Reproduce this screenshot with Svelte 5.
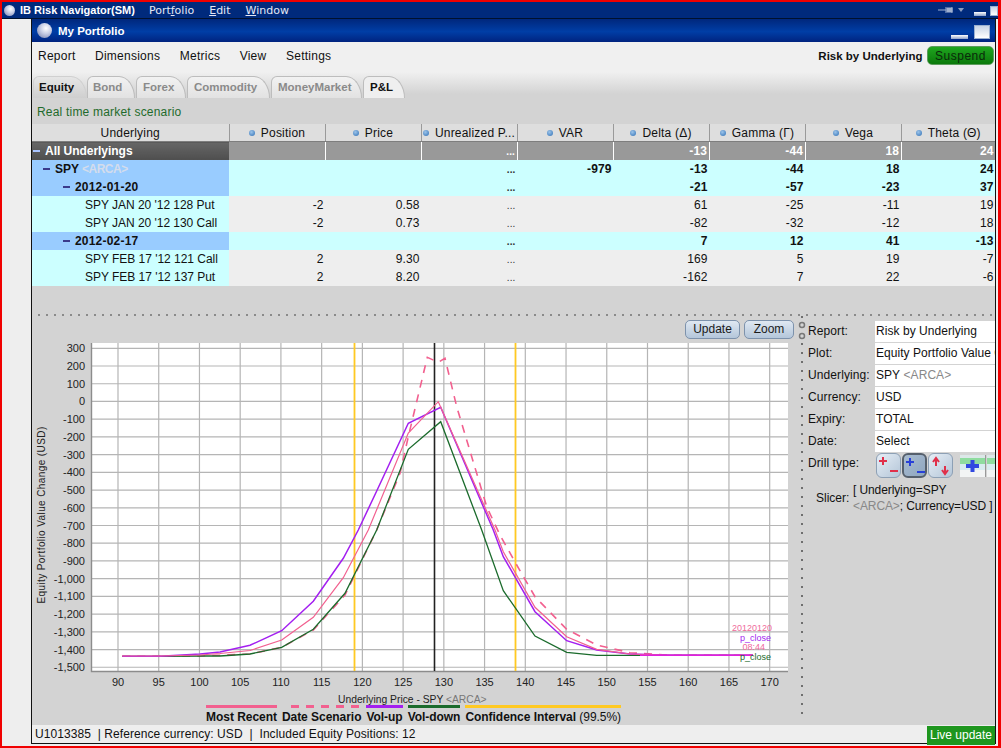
<script>
    // table content, top to bottom
    const columns = ["Position", "Price", "Unrealized P...", "VAR", "Delta (Δ)", "Gamma (Γ)", "Vega", "Theta (Θ)"];
    const rows = [
        { kind: "all", label: "All Underlyings", cells: ["", "", "...", "", "-13", "-44", "18", "24"] },
        { kind: "group spy", label: "SPY", exch: "<ARCA>", cells: ["", "", "...", "-979", "-13", "-44", "18", "24"] },
        { kind: "group date", label: "2012-01-20", cells: ["", "", "...", "", "-21", "-57", "-23", "37"] },
        { kind: "leaf", label: "SPY JAN 20 '12 128 Put", cells: ["-2", "0.58", "...", "", "61", "-25", "-11", "19"] },
        { kind: "leaf", label: "SPY JAN 20 '12 130 Call", cells: ["-2", "0.73", "...", "", "-82", "-32", "-12", "18"] },
        { kind: "group date", label: "2012-02-17", cells: ["", "", "...", "", "7", "12", "41", "-13"] },
        { kind: "leaf", label: "SPY FEB 17 '12 121 Call", cells: ["2", "9.30", "...", "", "169", "5", "19", "-7"] },
        { kind: "leaf", label: "SPY FEB 17 '12 137 Put", cells: ["2", "8.20", "...", "", "-162", "7", "22", "-6"] },
    ];

    const tabs = [
        { name: "Equity", cls: "on" },
        { name: "Bond", cls: "" },
        { name: "Forex", cls: "" },
        { name: "Commodity", cls: "" },
        { name: "MoneyMarket", cls: "" },
        { name: "P&L", cls: "pl" },
    ];

    // chart scales are in page pixels, the svg viewBox uses the same numbers
    const xTicks = [90, 95, 100, 105, 110, 115, 120, 125, 130, 135, 140, 145, 150, 155, 160, 165, 170];
    const yTicks = [300, 200, 100, 0, -100, -200, -300, -400, -500, -600, -700, -800, -900, -1000, -1100, -1200, -1300, -1400, -1500];
    const xPos = (v) => 118 + (v - 90) * 8.146;
    const yPos = (v) => 348.3 + (300 - v) * 0.1772;
    const fmt = (v) => (Math.abs(v) >= 1000 ? `-${Math.floor(Math.abs(v) / 1000)},${String(Math.abs(v) % 1000).padStart(3, "0")}` : String(v));

    const recent = "122,656 160,656 200,655 220,653.5 250,650.5 281.7,640 313.3,617.3 343.3,577.7 368.3,530 408.3,433 438.3,401.7 495,530 503.3,551.7 535,607.3 566.7,636.7 596.7,649.3 630,654 670,655.3 753,655.3";
    const volUp = "122.3,656.3 160,656.3 200,654 220,652 250,645.3 281.7,630.7 313.3,601.3 343.3,558.3 358.3,530 376.7,491 408.3,423.3 440.7,407.3 493.3,530 503.3,556.7 535,611.7 566.7,640.7 596.7,650 630,654 670,655.3 753,655.3";
    const volDown = "122.3,656.3 160,656.3 200,656 220,656 250,654 281.7,647.3 313.3,629.3 345,593.3 376.7,530 408.3,449.3 440.7,421.7 481.7,530 503.3,590.7 535,636 566.7,652.3 596.7,655.3 670,655.3 753,655.3";
    const scenario = "122.3,656.3 200,656 250,654 281.7,647.3 313.3,630 345,595 376.7,530 400,473.3 408.3,436.7 427.3,357.3 438.3,362.3 445,358.3 456.7,406.7 486.7,506.7 500,535 516.7,565 535,596.7 566.7,629.3 596.7,645 630,652.7 670,655.3 753,655.3";

    const selectors = [
        { label: "Report:", value: "Risk by Underlying" },
        { label: "Plot:", value: "Equity Portfolio Value Change" },
        { label: "Underlying:", value: "SPY", exch: "<ARCA>" },
        { label: "Currency:", value: "USD" },
        { label: "Expiry:", value: "TOTAL" },
        { label: "Date:", value: "Select" },
    ];
</script>

<div class="screen">
    <div class="app-title">
        <span class="globe small"></span>
        <b>IB Risk Navigator(SM)</b>
        <nav>
            <span>Port<u>f</u>olio</span>
            <span><u>E</u>dit</span>
            <span><u>W</u>indow</span>
        </nav>
        <svg class="pin" width="26" height="8" viewBox="0 0 26 8">
            <path d="M0 4h8M8 1v6M9 2h5v4H9zM14 1v6" stroke="#9fb0cf" fill="#9fb0cf" />
            <path d="M20 2h6l-3 4z" fill="#8a9cc0" />
        </svg>
        <span class="min-btn small"></span>
        <span class="max-btn small"></span>
    </div>

    <div class="desk">
        <div class="gutter"></div>
        <div class="window">
            <div class="win-title">
                <span class="globe"></span>
                <b>My Portfolio</b>
                <span class="min-btn"></span>
                <span class="max-btn"></span>
            </div>

            <div class="head">
                <div class="menu">
                    <span>Report</span>
                    <span>Dimensions</span>
                    <span>Metrics</span>
                    <span>View</span>
                    <span>Settings</span>
                    <b class="report-name">Risk by Underlying</b>
                    <button class="suspend">Suspend</button>
                </div>
                <div class="tabs">
                    {#each tabs as tab}
                        <div class="tab {tab.cls}">{tab.name}</div>
                    {/each}
                </div>
                <div class="scenario">Real time market scenario</div>
            </div>

            <table>
                <colgroup>
                    <col class="c-first" />
                    {#each columns.slice(0, -1) as _}
                        <col class="c-num" />
                    {/each}
                    <col />
                </colgroup>
                <thead>
                    <tr>
                        <th>Underlying</th>
                        {#each columns as col}
                            <th><i class="dot"></i>{col}</th>
                        {/each}
                    </tr>
                </thead>
                <tbody>
                    {#each rows as row}
                        <tr class={row.kind}>
                            <td class="name">
                                {#if row.kind !== "leaf"}<i class="minus"></i>{/if}{row.label}
                                {#if row.exch}<span class="exch">{row.exch}</span>{/if}
                            </td>
                            {#each row.cells as cell, i}
                                <td class:dots={i === 2}>{cell}</td>
                            {/each}
                        </tr>
                    {/each}
                </tbody>
            </table>

            <div class="h-split"></div>

            <div class="lower">
                <div class="chart-col">
                    <div class="chart-tools">
                        <button class="tool">Update</button>
                        <button class="tool">Zoom</button>
                    </div>
                    <svg class="chart" width="768" height="363" viewBox="32 340 768 363">
                        <rect x="91" y="343" width="697" height="328" fill="#fff" />
                        <g stroke="#b5b5b5" stroke-width="1.2">
                            {#each xTicks as t}
                                <line x1={xPos(t)} x2={xPos(t)} y1="343" y2="671" />
                            {/each}
                            {#each yTicks as t}
                                <line x1="91" x2="788" y1={yPos(t)} y2={yPos(t)} />
                            {/each}
                        </g>
                        <path d="M91.5 343V671.5H788" fill="none" stroke="#8c8c8c" stroke-width="1.4" />
                        <g class="tick" text-anchor="end">
                            {#each yTicks as t}
                                <text x="85" y={yPos(t) + 4}>{fmt(t)}</text>
                            {/each}
                        </g>
                        <g class="tick" text-anchor="middle">
                            {#each xTicks as t}
                                <text x={xPos(t)} y="686">{t}</text>
                            {/each}
                        </g>
                        <text class="axis y-title" transform="translate(45 515) rotate(-90)" text-anchor="middle">Equity Portfolio Value Change (USD)</text>
                        <text class="axis" x="338" y="703">Underlying Price - SPY <tspan fill="#777">&lt;ARCA&gt;</tspan></text>

                        <line x1="354.5" x2="354.5" y1="343" y2="671" stroke="#ffc922" stroke-width="1.8" />
                        <line x1="515.5" x2="515.5" y1="343" y2="671" stroke="#ffc922" stroke-width="1.8" />
                        <line x1="434.5" x2="434.5" y1="343" y2="671" stroke="#222" stroke-width="1.6" />

                        <polyline points={scenario} fill="none" stroke="#f2608f" stroke-width="1.6" stroke-dasharray="8 7" />
                        <polyline points={volDown} fill="none" stroke="#1b6b2c" stroke-width="1.3" />
                        <polyline points={volUp} fill="none" stroke="#a31ff0" stroke-width="1.5" />
                        <polyline points={recent} fill="none" stroke="#f2608f" stroke-width="1.2" />
                        <polyline points="640,655.3 753,655.3" fill="none" stroke="#e020e0" stroke-width="1.5" />

                        <g class="end-label" text-anchor="end">
                            <text x="772" y="631" fill="#f06a9c">20120120</text>
                            <text x="771" y="641" fill="#a31ff0">p_close</text>
                            <text x="765" y="650" fill="#f06a9c">08:44</text>
                            <text x="771" y="660" fill="#1b6b2c">p_close</text>
                        </g>
                    </svg>
                    <div class="legend">
                        <div class="item"><i class="bar recent"></i>Most Recent</div>
                        <div class="item"><i class="bar dashed"></i>Date Scenario</div>
                        <div class="item"><i class="bar up"></i>Vol-up</div>
                        <div class="item"><i class="bar down"></i>Vol-down</div>
                        <div class="item"><i class="bar conf"></i><span>Confidence Interval <em>(99.5%)</em></span></div>
                    </div>
                </div>

                <div class="v-split">
                    <svg width="8" height="20" viewBox="0 0 8 20">
                        <circle cx="4" cy="4" r="2.5" fill="none" stroke="#777" stroke-width="1.5" />
                        <circle cx="4" cy="15" r="2.5" fill="none" stroke="#777" stroke-width="1.5" />
                    </svg>
                </div>

                <div class="side">
                    {#each selectors as s}
                        <div class="sel">
                            <label>{s.label}</label>
                            <div class="box">{s.value}{#if s.exch}&nbsp;<span class="exch-side">{s.exch}</span>{/if}</div>
                        </div>
                    {/each}
                    <div class="drill">
                        <label>Drill type:</label>
                        <button class="dbtn">
                            <svg width="24" height="24" viewBox="0 0 24 24">
                                <path d="M6 3v8M2 7h8" stroke="#e0304a" stroke-width="2" />
                                <path d="M13 17h8" stroke="#e0304a" stroke-width="2" />
                            </svg>
                        </button>
                        <button class="dbtn sel-on">
                            <svg width="24" height="24" viewBox="0 0 24 24">
                                <path d="M6 3v8M2 7h8" stroke="#2840d8" stroke-width="2" />
                                <path d="M13 17h8" stroke="#2840d8" stroke-width="2" />
                            </svg>
                        </button>
                        <button class="dbtn">
                            <svg width="24" height="24" viewBox="0 0 24 24">
                                <path d="M7 12V5M4 8l3-4 3 4" stroke="#e0304a" stroke-width="2" fill="none" />
                                <path d="M16 12v7M13 16l3 4 3-4" stroke="#e0304a" stroke-width="2" fill="none" />
                            </svg>
                        </button>
                        <i class="pic">
                            <svg width="25" height="22" viewBox="0 0 25 22">
                                <path d="M12.5 5v12M6 11h13" stroke="#3048e0" stroke-width="4" />
                            </svg>
                        </i>
                        <i class="pic cut"></i>
                    </div>
                    <div class="slicer">
                        <label>Slicer:</label>
                        <div>[ Underlying=SPY<br /><span class="exch-side">&lt;ARCA&gt;</span>; Currency=USD ]</div>
                    </div>
                </div>
            </div>

            <div class="status">
                <span>U1013385 &nbsp;| Reference currency: USD &nbsp;| &nbsp;Included Equity Positions: 12</span>
                <div class="live">Live update</div>
            </div>
        </div>
    </div>
</div>

<style>
    :global(body) {
        margin: 0;
        background: #eee;
    }

    .screen {
        box-sizing: border-box;
        width: 1001px;
        height: 748px;
        border: solid #f00000;
        border-width: 2px 3px 2px 2px;
        display: flex;
        flex-direction: column;
        font-family: "Liberation Sans", Arial, sans-serif;
        font-size: 12px;
        color: #111;
        overflow: hidden;
    }

    .app-title {
        height: 16px;
        flex: none;
        display: flex;
        align-items: center;
        background: #002a7c;
        color: #fff;
        border-bottom: 1px solid #00112e;
    }

    .app-title b {
        margin-left: 5px;
        font-size: 11px;
    }

    .app-title nav {
        display: flex;
        gap: 15px;
        margin-left: 14px;
        font-family: "DejaVu Sans", sans-serif;
        font-size: 11px;
        color: #e4e8f4;
    }

    .pin {
        margin-left: auto;
        margin-right: 10px;
    }

    .globe {
        width: 15px;
        height: 15px;
        margin-left: 5px;
        border-radius: 50%;
        background: radial-gradient(circle at 60% 35%, #fff 0, #c9cfe6 40%, #6d78a8 100%);
        flex: none;
    }

    .globe.small {
        width: 11px;
        height: 11px;
        margin-left: 2px;
    }

    .min-btn {
        width: 17px;
        height: 4px;
        background: linear-gradient(#fff, #8da0c8);
        align-self: flex-end;
        margin-bottom: 3px;
        margin-right: 6px;
    }

    .min-btn.small {
        width: 12px;
        margin-bottom: 2px;
        margin-right: 4px;
    }

    .max-btn {
        width: 14px;
        height: 12px;
        background: linear-gradient(#c8d4e6, #fff);
        border: 1px solid #9bb0d0;
        margin-right: 5px;
        align-self: flex-end;
        margin-bottom: 3px;
        flex: none;
    }

    .max-btn.small {
        width: 6px;
        height: 8px;
        margin-right: 0;
        margin-bottom: 2px;
    }

    .desk {
        flex: 1;
        display: flex;
        min-height: 0;
    }

    .gutter {
        width: 29px;
        flex: none;
        background: #eee;
    }

    .window {
        box-sizing: border-box;
        width: 965px;
        margin-bottom: 2px;
        border: solid #111;
        border-width: 0 1px 1px 1px;
        display: flex;
        flex-direction: column;
        background: #d3d3d3;
    }

    .win-title {
        height: 23px;
        flex: none;
        display: flex;
        align-items: center;
        color: #fff;
        background: linear-gradient(#00277c, #003ea6 55%, #00237f);
    }

    .win-title b {
        margin-left: 6px;
        margin-right: auto;
        font-size: 11.5px;
    }

    .head {
        flex: none;
        height: 82px;
        background: linear-gradient(#f0f0f0 30px, #d3d3d3 52px);
    }

    .menu {
        height: 27px;
        display: flex;
        align-items: center;
        gap: 19.5px;
        padding: 0 1px 0 6px;
        letter-spacing: 0.25px;
    }

    .report-name {
        margin-left: auto;
        margin-right: -15px;
        font-size: 11.5px;
        letter-spacing: 0;
    }

    .suspend {
        width: 67px;
        height: 19px;
        padding: 0;
        border: 1px solid #5c9c5c;
        border-radius: 5px;
        background: linear-gradient(#1fa51f, #0b7a0b);
        color: #0a2a0a;
        font: 12px "Liberation Sans", Arial, sans-serif;
        letter-spacing: 0.5px;
    }

    .tabs {
        margin-top: 7px;
        height: 22px;
        display: flex;
        padding-left: 1px;
    }

    .tab {
        box-sizing: border-box;
        height: 22px;
        padding: 4px 0 0 6px;
        margin-right: 1px;
        font-size: 11.5px;
        font-weight: bold;
        color: #8a8a8a;
        border: 1px solid #bdbdbd;
        border-bottom: 0;
        border-radius: 6px 16px 0 0 / 6px 22px 0 0;
        background: linear-gradient(#f2f2f2, #e2e2e2);
    }

    .tab:nth-child(1) {
        width: 54px;
        padding-left: 5px;
        margin-right: 0;
    }

    .tab:nth-child(2) {
        width: 48px;
        padding-left: 5px;
    }

    .tab:nth-child(3) {
        width: 50px;
    }

    .tab:nth-child(4) {
        width: 83px;
    }

    .tab:nth-child(5) {
        width: 91px;
    }

    .tab:nth-child(6) {
        width: 42px;
    }

    .tab.on {
        color: #111;
        border-color: #d0d0d0;
        background: linear-gradient(#e6e6e6, #cfcfcf);
    }

    .tab.pl {
        color: #111;
        background: #efefef;
    }

    .scenario {
        padding: 7px 0 0 5px;
        color: #1f6b2c;
        letter-spacing: 0.2px;
    }

    table {
        flex: none;
        width: 963px;
        border-collapse: collapse;
        table-layout: fixed;
    }

    .c-first {
        width: 197px;
    }

    .c-num {
        width: 96px;
    }

    th {
        height: 17px;
        padding: 0;
        font-weight: normal;
        background: #dedede;
        border-right: 1px solid #9a9a9a;
        border-bottom: 1px solid #7e7e7e;
        white-space: nowrap;
        letter-spacing: 0.2px;
        overflow: hidden;
    }

    th:last-child {
        border-right: 0;
    }

    .dot {
        display: inline-block;
        width: 6px;
        height: 6px;
        margin-right: 6px;
        border-radius: 50%;
        vertical-align: 1px;
        background: radial-gradient(circle at 40% 35%, #9cc4ea, #2f6fb4);
    }

    td {
        box-sizing: border-box;
        height: 18px;
        padding: 1px 1.5px 0 0;
        text-align: right;
        white-space: nowrap;
        overflow: hidden;
        letter-spacing: 0.1px;
        background: #eeeeee;
    }

    td.name {
        text-align: left;
        padding: 0;
        letter-spacing: -0.03px;
    }

    td.dots {
        font-size: 10px;
        color: #333;
    }

    .minus {
        display: inline-block;
        width: 7px;
        height: 2px;
        margin-right: 5px;
        vertical-align: 3px;
        background: #3a3a8c;
    }

    .leaf td.name {
        padding-left: 53px;
        background: #ccffff;
    }

    .all td {
        background: #999;
        color: #fff;
        font-weight: bold;
        border-right: 1px solid #fff;
    }

    .all td:last-child,
    .all td.name {
        border-right: 0;
    }

    .all td.name {
        background: linear-gradient(#666, #4e4e4e);
        padding-left: 1px;
    }

    .all .minus {
        background: #a9c4ff;
    }

    .group td {
        background: #ccffff;
        font-weight: bold;
    }

    .group td.name {
        background: #99ccff;
    }

    .spy td.name {
        padding-left: 11px;
    }

    .date td.name {
        padding-left: 31px;
        letter-spacing: 0.2px;
    }

    .exch {
        color: #d4dcec;
        letter-spacing: -0.5px;
    }

    .h-split {
        flex: none;
        height: 2px;
        margin: 28px 0 0 6px;
        background: repeating-linear-gradient(90deg, #8a8a8a 0 2px, transparent 2px 8px);
    }

    .lower {
        flex: 1;
        min-height: 0;
        display: flex;
    }

    .chart-col {
        width: 768px;
        flex: none;
        display: flex;
        flex-direction: column;
    }

    .chart-tools {
        height: 24px;
        flex: none;
        display: flex;
        justify-content: flex-end;
        align-items: flex-start;
        gap: 4px;
        padding: 4px 6px 0 0;
        box-sizing: border-box;
    }

    .tool {
        height: 19px;
        padding: 0;
        border: 1px solid #7d92ac;
        border-radius: 5px;
        background: linear-gradient(#dfe8f2, #b4c6da);
        color: #1a1a1a;
        font: 12px "Liberation Sans", Arial, sans-serif;
        width: 55px;
    }

    .tool + .tool {
        width: 50px;
    }

    .chart {
        display: block;
        flex: none;
        overflow: visible;
    }

    .tick text {
        font-size: 11px;
        fill: #222;
    }

    .axis {
        font-size: 10.3px;
        fill: #222;
    }

    .y-title {
        font-size: 10px;
        letter-spacing: 0.4px;
    }

    .end-label text {
        font-size: 9px;
    }

    .legend {
        flex: 1;
        display: flex;
        gap: 5px;
        padding-left: 174px;
        font-weight: bold;
        letter-spacing: -0.04px;
    }

    .item {
        display: flex;
        flex-direction: column;
        white-space: nowrap;
    }

    .item em {
        font-style: normal;
        font-weight: normal;
    }

    .bar {
        height: 3px;
        margin: 2px 0;
    }

    .bar.recent {
        background: #f2608f;
    }

    .bar.dashed {
        background: repeating-linear-gradient(90deg, #f2608f 0 8px, transparent 8px 15px);
        margin-left: 9px;
    }

    .bar.up {
        background: #a31ff0;
    }

    .bar.down {
        background: #1b6b2c;
    }

    .bar.conf {
        background: #ffc922;
    }

    .v-split {
        width: 2px;
        flex: none;
        margin: 0 3px 0 1px;
        height: 400px;
        background: repeating-linear-gradient(#6e6e6e 0 2px, transparent 2px 9px);
        position: relative;
    }

    .v-split svg {
        position: absolute;
        left: -3px;
        top: 5px;
        background: #d3d3d3;
    }

    .side {
        flex: 1;
        min-width: 0;
        padding: 5px 0 0 2px;
        overflow: hidden;
    }

    .sel {
        display: flex;
        height: 22px;
    }

    label {
        width: 67px;
        flex: none;
        line-height: 20px;
        letter-spacing: 0.1px;
    }

    .box {
        flex: 1;
        min-width: 0;
        height: 21px;
        line-height: 20px;
        padding-left: 1px;
        background: #fff;
        white-space: nowrap;
        overflow: hidden;
        letter-spacing: 0.05px;
    }

    .exch-side {
        color: #888;
    }

    .drill {
        display: flex;
        align-items: flex-start;
        height: 29px;
        gap: 1px;
    }

    .dbtn {
        width: 25px;
        height: 25px;
        padding: 0;
        flex: none;
        border: 1px solid #8da0b5;
        border-radius: 6px;
        background: linear-gradient(135deg, #e6eef6, #b4c6d8);
    }

    .dbtn svg {
        display: block;
    }

    .dbtn.sel-on {
        border: 2px solid #56606c;
        background: linear-gradient(135deg, #a8bbd0, #8fa6bf);
    }

    .pic {
        margin: 2px 0 0 6px;
        width: 25px;
        height: 22px;
        flex: none;
        background: linear-gradient(#dce8e8 0 12%, #8fdc9f 12% 42%, #d8ecf0 42% 70%, #f2f4f4 70%);
        border-right: 1px solid #999;
    }

    .pic.cut {
        margin-left: 0;
        width: 12px;
        border: 0;
    }

    .slicer {
        display: flex;
        align-items: center;
        padding-left: 8px;
        line-height: 16px;
        white-space: nowrap;
        letter-spacing: -0.1px;
    }

    .slicer label {
        width: 37px;
        letter-spacing: 0;
    }

    .status {
        flex: none;
        height: 18px;
        line-height: 18px;
        display: flex;
        align-items: flex-start;
        justify-content: space-between;
        background: #eee;
        padding-left: 3px;
        letter-spacing: 0.07px;
    }

    .live {
        width: 68px;
        height: 19px;
        line-height: 19px;
        margin-top: 1px;
        text-align: center;
        background: #1e961e;
        color: #fff;
        letter-spacing: 0;
    }
</style>
